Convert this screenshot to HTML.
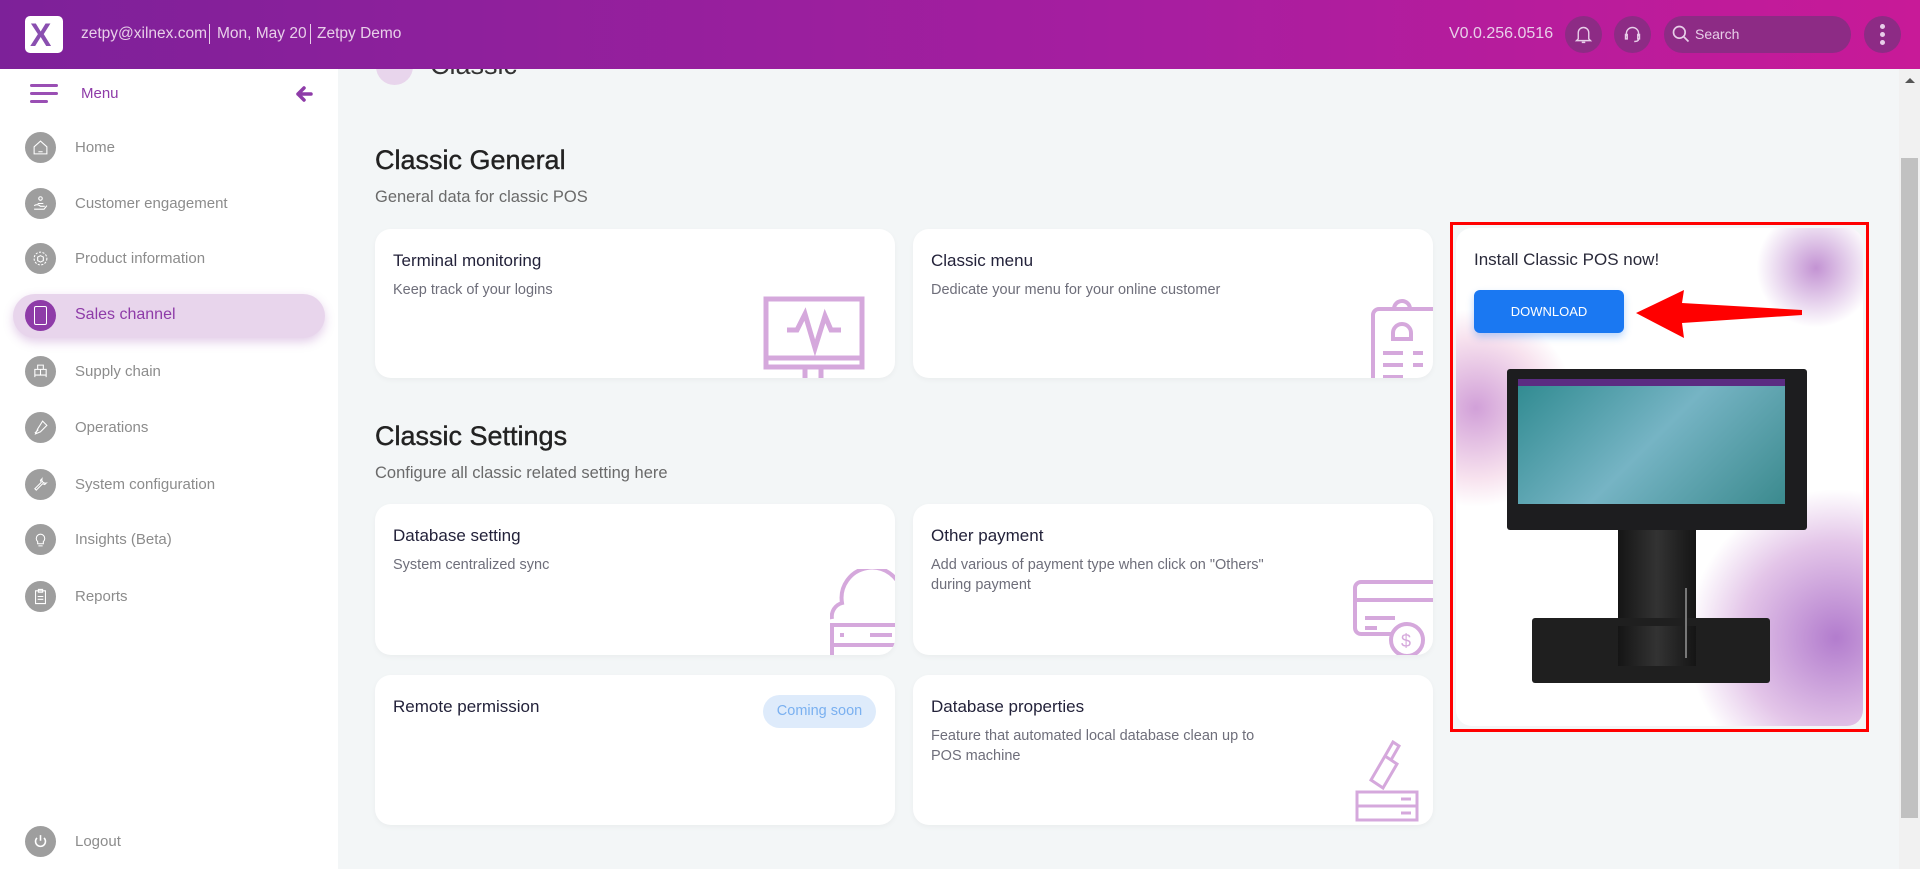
<!DOCTYPE html>
<html><head><meta charset="utf-8"><style>
*{box-sizing:border-box;margin:0;padding:0}
body{width:1920px;height:869px;overflow:hidden;background:#f3f6f7;font-family:"Liberation Sans",sans-serif;position:relative}
.abs{position:absolute}
.hdr{left:0;top:0;width:1920px;height:69px;background:linear-gradient(90deg,#7d2199,#a71ea0 60%,#c81a98);z-index:5}
.ht{color:#e8cfe9;font-size:15.5px;top:25px}
.sb{left:0;top:69px;width:338px;height:800px;background:#fff}
.nav{left:25px;width:31px;height:31px;border-radius:50%;background:#9e9e9e}
.nav svg{position:absolute;left:7px;top:7px}
.nl{left:75px;font-size:15px;color:#8c8c8c}
.card{background:#fff;border-radius:16px;overflow:hidden;box-shadow:0 2px 6px rgba(0,0,0,.04)}
.ct{position:absolute;left:18px;top:22px;font-size:17px;color:#23223a}
.cd{position:absolute;left:18px;top:51px;font-size:14.5px;color:#6e6e7a;line-height:20px}
h2{position:absolute;font-weight:normal;font-size:27px;color:#222;-webkit-text-stroke:0.4px #222}
.sub{position:absolute;font-size:16.5px;color:#6a6a6a}
</style></head><body>
<div class="abs hdr">
 <div class="abs" style="left:25px;top:16px;width:38px;height:37px;background:#fff;border-radius:5px"></div>
 <div class="abs" style="left:30px;top:17px;font-size:32px;font-weight:bold;color:#8a4fb0;line-height:36px">X</div>
 <div class="abs ht" style="left:81px">zetpy@xilnex.com</div>
 <div class="abs" style="left:209px;top:24px;width:1px;height:20px;background:#e8cfe9"></div>
 <div class="abs ht" style="left:217px">Mon, May 20</div>
 <div class="abs" style="left:310px;top:24px;width:1px;height:20px;background:#e8cfe9"></div>
 <div class="abs ht" style="left:317px">Zetpy Demo</div>
 <div class="abs ht" style="left:1449px;font-size:16px">V0.0.256.0516</div>
 <div class="abs" style="left:1565px;top:16px;width:37px;height:37px;border-radius:50%;background:#8d2b85"></div>
 <svg class="abs" style="left:1573px;top:24px" width="21" height="21" viewBox="0 0 24 24" fill="none" stroke="#e8cfe9" stroke-width="1.6"><path d="M6 17V10a6 6 0 0112 0v7l2 2H4z M10 21h4"/></svg>
 <div class="abs" style="left:1614px;top:16px;width:37px;height:37px;border-radius:50%;background:#8d2b85"></div>
 <svg class="abs" style="left:1622px;top:24px" width="21" height="21" viewBox="0 0 24 24" fill="none" stroke="#e8cfe9" stroke-width="1.6"><path d="M5 14v-3a7 7 0 0114 0v3 M4 12h2v5H4z M18 12h2v5h-2z M19 17q0 3-5 3"/></svg>
 <div class="abs" style="left:1664px;top:16px;width:187px;height:37px;border-radius:19px;background:#8d2b85"></div>
 <svg class="abs" style="left:1671px;top:24px" width="20" height="20" viewBox="0 0 24 24" fill="none" stroke="#e8cfe9" stroke-width="2"><circle cx="10" cy="10" r="7"/><path d="M15 15l6 6"/></svg>
 <div class="abs ht" style="left:1695px;top:26px;font-size:14px">Search</div>
 <div class="abs" style="left:1864px;top:16px;width:37px;height:37px;border-radius:50%;background:#8d2b85"></div>
 <div class="abs" style="left:1880px;top:24px;width:5px;height:5px;border-radius:50%;background:#e8cfe9;box-shadow:0 8px 0 #e8cfe9,0 16px 0 #e8cfe9"></div>
</div>
<div class="abs sb"></div>
<div class="abs" style="left:30px;top:84px;width:28px;height:3px;background:#9a4fb4;border-radius:2px;box-shadow:0 8px 0 #9a4fb4"></div>
<div class="abs" style="left:30px;top:100px;width:18px;height:3px;background:#9a4fb4;border-radius:2px"></div>
<div class="abs" style="left:81px;top:85px;font-size:15px;color:#8e3ba8">Menu</div>
<svg class="abs" style="left:295px;top:85px" width="18" height="18" viewBox="0 0 18 18" fill="none" stroke="#8e3ba8" stroke-width="3.5" stroke-linecap="round" stroke-linejoin="round"><path d="M16 9H3 M9 3L3 9l6 6"/></svg>
<div class="abs" style="left:13px;top:294px;width:312px;height:44px;border-radius:22px;background:#e8d5ec;box-shadow:0 4px 10px rgba(142,59,168,.25)"></div>
<div class="abs nav" style="top:132px"><svg width="17" height="17" viewBox="0 0 24 24" fill="none" stroke="#fff" stroke-width="1.5"><path d="M3 11l9-8 9 8v10H3z M9 18h6"/></svg></div><div class="abs nl" style="top:139px">Home</div>
<div class="abs nav" style="top:188px"><svg width="17" height="17" viewBox="0 0 24 24" fill="none" stroke="#fff" stroke-width="1.5"><circle cx="12" cy="5" r="2.5"/><path d="M8 12h8 M3 15q5-3 9 1h6 M3 20h14l4-5"/></svg></div><div class="abs nl" style="top:195px">Customer engagement</div>
<div class="abs nav" style="top:243px"><svg width="17" height="17" viewBox="0 0 24 24" fill="none" stroke="#fff" stroke-width="1.5"><circle cx="12" cy="12" r="9" stroke-dasharray="3 2"/><path d="M8 10l4-2 4 2v5l-4 2-4-2z"/></svg></div><div class="abs nl" style="top:250px">Product information</div>
<div class="abs nav" style="top:300px;background:#8e3ba8"></div><div class="abs nl" style="top:306px;color:#8e3ba8;font-size:16px">Sales channel</div>
<div class="abs" style="left:34px;top:306px;width:13px;height:19px;border:1.5px solid #fff;border-radius:2px"></div>
<div class="abs nav" style="top:356px"><svg width="17" height="17" viewBox="0 0 24 24" fill="none" stroke="#fff" stroke-width="1.5"><path d="M8 3h8v6H8z M4 9h16v8H4z M4 17v3 M20 17v3 M12 9v8"/></svg></div><div class="abs nl" style="top:363px">Supply chain</div>
<div class="abs nav" style="top:412px"><svg width="17" height="17" viewBox="0 0 24 24" fill="none" stroke="#fff" stroke-width="1.5"><path d="M15 3l6 6-9 9-7 3 3-7z M4 20l5-5"/></svg></div><div class="abs nl" style="top:419px">Operations</div>
<div class="abs nav" style="top:469px"><svg width="17" height="17" viewBox="0 0 24 24" fill="none" stroke="#fff" stroke-width="1.5"><path d="M14 4a5 5 0 006 6l-2 2-3-1L6 20l-2-2 9-9-1-3z"/></svg></div><div class="abs nl" style="top:476px">System configuration</div>
<div class="abs nav" style="top:524px"><svg width="17" height="17" viewBox="0 0 24 24" fill="none" stroke="#fff" stroke-width="1.5"><path d="M8 15a6 6 0 118 0v3H8z M9 21h6"/></svg></div><div class="abs nl" style="top:531px">Insights (Beta)</div>
<div class="abs nav" style="top:581px"><svg width="17" height="17" viewBox="0 0 24 24" fill="none" stroke="#fff" stroke-width="1.5"><path d="M5 4h14v18H5z M9 2h6v4H9z M8 12h8 M8 16h8"/></svg></div><div class="abs nl" style="top:588px">Reports</div>
<div class="abs nav" style="top:826px"><svg width="17" height="17" viewBox="0 0 24 24" fill="none" stroke="#fff" stroke-width="2.2"><path d="M7 7a7 7 0 1010 0 M12 3v8"/></svg></div><div class="abs nl" style="top:833px">Logout</div>

<div class="abs" style="left:376px;top:48px;width:37px;height:37px;border-radius:50%;background:#e8d5ec"></div>
<div class="abs" style="left:430px;top:50px;font-size:27px;color:#333">Classic</div>

<h2 style="left:375px;top:145px">Classic General</h2>
<div class="sub" style="left:375px;top:188px">General data for classic POS</div>
<h2 style="left:375px;top:421px">Classic Settings</h2>
<div class="sub" style="left:375px;top:464px">Configure all classic related setting here</div>

<div class="abs card" style="left:375px;top:229px;width:520px;height:149px"><div class="ct">Terminal monitoring</div><div class="cd">Keep track of your logins</div>
<svg class="abs" style="left:388px;top:67px" width="110" height="85" viewBox="0 0 110 85" fill="none" stroke="#d5a8dc" stroke-width="5"><rect x="3" y="3" width="96" height="68"/><path d="M3 62h96 M42 72v14 M58 72v14 M24 34h10l8-16 10 34 10-32 6 14h10"/></svg></div>
<div class="abs card" style="left:913px;top:229px;width:520px;height:149px"><div class="ct">Classic menu</div><div class="cd">Dedicate your menu for your online customer</div>
<svg class="abs" style="left:456px;top:64px" width="70" height="90" viewBox="0 0 70 90" fill="none" stroke="#d5a8dc" stroke-width="4"><path d="M4 90V22a6 6 0 016-6h60 M25 16a8 8 0 0116 0 M24 40a9 9 0 0118 0v6H24z M14 60h20 M44 60h10 M14 72h20 M44 72h10 M14 84h20"/></svg></div>
<div class="abs card" style="left:375px;top:504px;width:520px;height:151px"><div class="ct">Database setting</div><div class="cd">System centralized sync</div>
<svg class="abs" style="left:455px;top:65px" width="70" height="90" viewBox="0 0 70 90" fill="none" stroke="#d5a8dc" stroke-width="4"><path d="M2 50a14 14 0 0110-16 30 30 0 0160-10 M2 56h70v20H2z M2 76v20 M10 66h4 M40 66h22"/></svg></div>
<div class="abs card" style="left:913px;top:504px;width:520px;height:151px"><div class="ct">Other payment</div><div class="cd">Add various of payment type when click on "Others"<br>during payment</div>
<svg class="abs" style="left:438px;top:76px" width="85" height="80" viewBox="0 0 85 80" fill="none" stroke="#d5a8dc" stroke-width="4"><path d="M85 2H10a6 6 0 00-6 6v40a6 6 0 006 6h30 M4 20h81 M14 38h30 M14 48h12"/><circle cx="56" cy="60" r="16"/><text x="50" y="67" font-size="18" fill="#d5a8dc" stroke="none" font-family="Liberation Sans">$</text></svg></div>
<div class="abs card" style="left:375px;top:675px;width:520px;height:150px"><div class="ct">Remote permission</div>
<div class="abs" style="left:388px;top:20px;width:113px;height:33px;border-radius:17px;background:#deebfb;color:#7ab0f0;font-size:14.5px;text-align:center;line-height:33px">Coming soon</div></div>
<div class="abs card" style="left:913px;top:675px;width:520px;height:150px"><div class="ct">Database properties</div><div class="cd">Feature that automated local database clean up to<br>POS machine</div>
<svg class="abs" style="left:440px;top:65px" width="80" height="90" viewBox="0 0 80 90" fill="none" stroke="#d5a8dc" stroke-width="3"><path d="M40 2l6 4-8 14-6-4z M32 16l-14 24 12 8 14-24z M4 52h60v14H4z M4 66h60v14H4z M48 59h10 M48 73h10"/></svg></div>

<div class="abs" style="left:1450px;top:222px;width:419px;height:510px;border:3px solid #f00"></div>
<div class="abs" style="left:1456px;top:228px;width:407px;height:498px;border-radius:16px;overflow:hidden;background:#fff">
 <div class="abs" style="left:-80px;top:80px;width:200px;height:200px;border-radius:50%;background:radial-gradient(circle,rgba(190,120,200,.7),rgba(230,160,200,.3) 50%,rgba(255,255,255,0) 70%)"></div>
 <div class="abs" style="left:300px;top:-20px;width:120px;height:120px;border-radius:50%;background:radial-gradient(circle,rgba(180,120,200,.8),rgba(255,255,255,0) 70%)"></div>
 <div class="abs" style="left:230px;top:260px;width:300px;height:300px;border-radius:50%;background:radial-gradient(circle,rgba(170,110,200,.9),rgba(200,140,210,.5) 45%,rgba(255,255,255,0) 70%)"></div>
 <div class="abs" style="left:18px;top:22px;font-size:17px;color:#2a2a3a">Install Classic POS now!</div>
 <div class="abs" style="left:18px;top:62px;width:150px;height:43px;border-radius:6px;background:#1a78f2;color:#fff;font-size:13px;text-align:center;line-height:43px;box-shadow:0 4px 8px rgba(26,120,242,.3)">DOWNLOAD</div>
 <svg class="abs" style="left:180px;top:60px" width="170" height="52" viewBox="0 0 170 52"><path d="M0 25L48 2 46 15 166 22 166 27 46 35 48 50z" fill="#f00"/></svg>
 <div class="abs" style="left:290px;top:152px;width:18px;height:148px;background:#2a2a2c;border-radius:2px"></div>
 <div class="abs" style="left:51px;top:141px;width:300px;height:161px;background:#1d1d1f;border-radius:3px"></div>
 <div class="abs" style="left:62px;top:151px;width:267px;height:125px;background:linear-gradient(135deg,#2f8a90,#76b4c4 50%,#3b8a8e)"></div>
 <div class="abs" style="left:62px;top:151px;width:267px;height:7px;background:#5b2c82"></div>
 <div class="abs" style="left:162px;top:302px;width:78px;height:150px;background:linear-gradient(90deg,#151515,#333 50%,#151515)"></div>
 <div class="abs" style="left:76px;top:390px;width:238px;height:65px;background:#1f1f1f;border-radius:3px"></div>
 <div class="abs" style="left:162px;top:398px;width:78px;height:40px;background:linear-gradient(90deg,#151515,#333 50%,#151515)"></div>
 <div class="abs" style="left:229px;top:360px;width:2px;height:70px;background:#777"></div>
</div>

<div class="abs" style="left:1899px;top:69px;width:21px;height:800px;background:#f1f1f1"></div>
<div class="abs" style="left:1901px;top:158px;width:17px;height:660px;background:#c1c1c1"></div>
<div class="abs" style="left:1905px;top:78px;width:0;height:0;border-left:5px solid transparent;border-right:5px solid transparent;border-bottom:5px solid #555"></div>
</body></html>
